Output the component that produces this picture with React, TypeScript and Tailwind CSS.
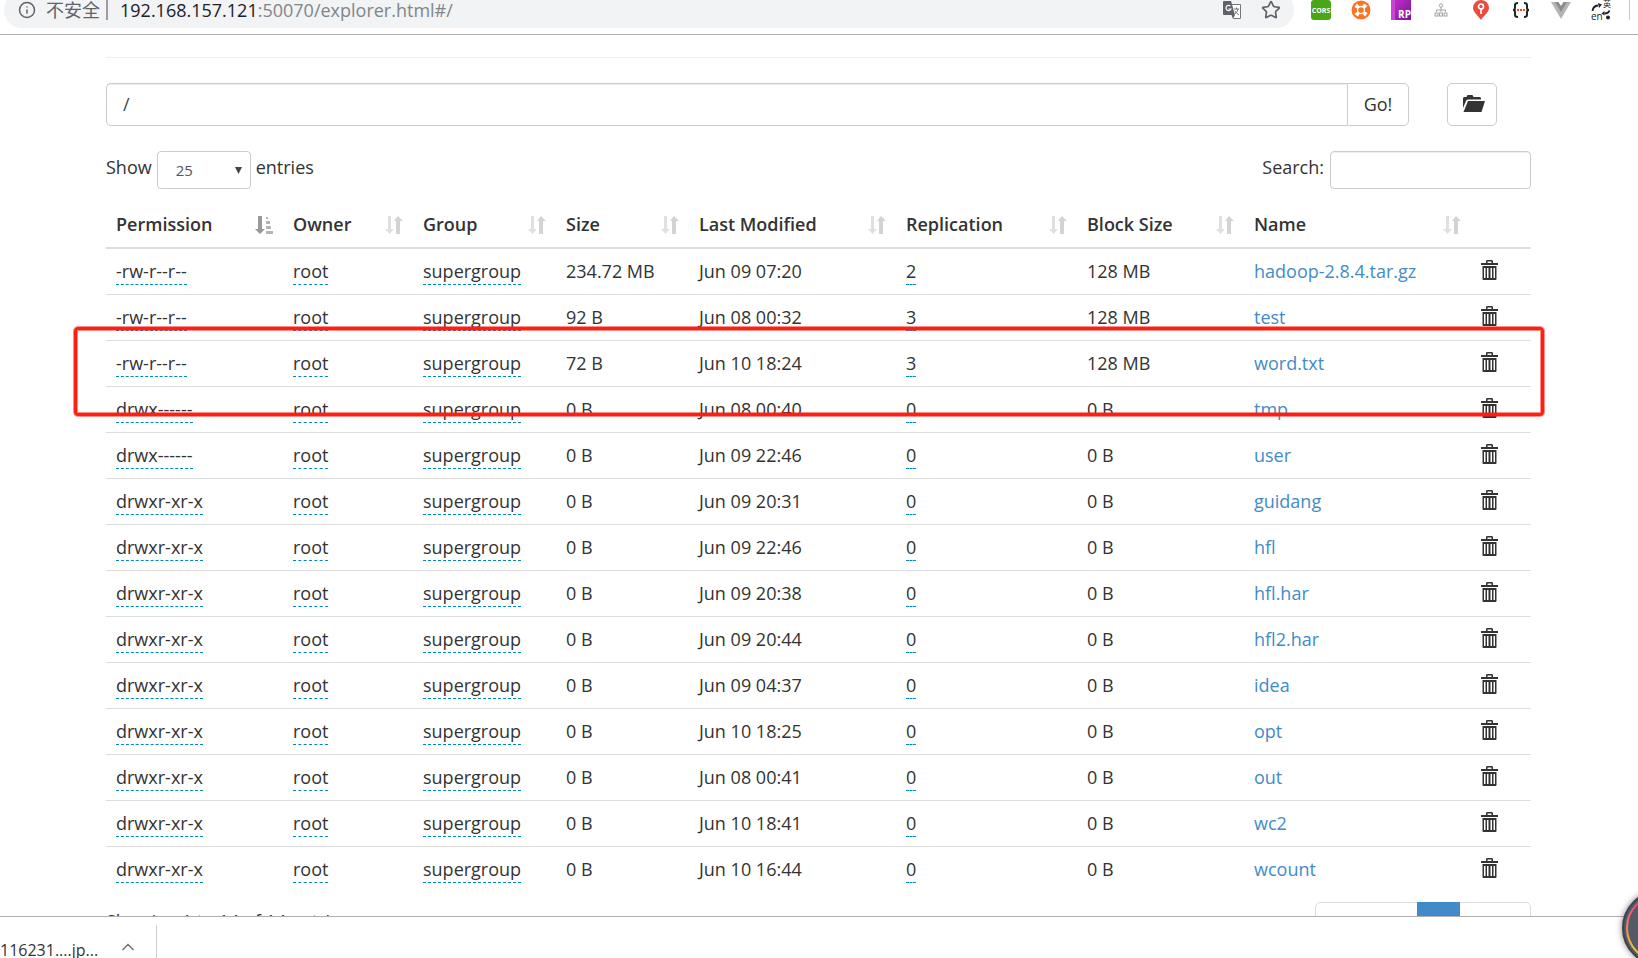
import clsx from 'clsx'
import { ChevronUp, Info, Star } from 'lucide-react'

interface IFileEntry {
  permission: string
  size: string
  modified: string
  replication: number
  blockSize: string
  name: string
}

interface IColumn {
  label: string
  width: string
}

const OWNER = 'root'
const GROUP = 'supergroup'

const columns: IColumn[] = [
  { label: 'Permission', width: 'w-[177px]' },
  { label: 'Owner', width: 'w-[130px]' },
  { label: 'Group', width: 'w-[143px]' },
  { label: 'Size', width: 'w-[133px]' },
  { label: 'Last Modified', width: 'w-[207px]' },
  { label: 'Replication', width: 'w-[181px]' },
  { label: 'Block Size', width: 'w-[167px]' },
  { label: 'Name', width: 'w-[227px]' },
]

const entries: IFileEntry[] = [
  { permission: '-rw-r--r--', size: '234.72 MB', modified: 'Jun 09 07:20', replication: 2, blockSize: '128 MB', name: 'hadoop-2.8.4.tar.gz' },
  { permission: '-rw-r--r--', size: '92 B', modified: 'Jun 08 00:32', replication: 3, blockSize: '128 MB', name: 'test' },
  { permission: '-rw-r--r--', size: '72 B', modified: 'Jun 10 18:24', replication: 3, blockSize: '128 MB', name: 'word.txt' },
  { permission: 'drwx------', size: '0 B', modified: 'Jun 08 00:40', replication: 0, blockSize: '0 B', name: 'tmp' },
  { permission: 'drwx------', size: '0 B', modified: 'Jun 09 22:46', replication: 0, blockSize: '0 B', name: 'user' },
  { permission: 'drwxr-xr-x', size: '0 B', modified: 'Jun 09 20:31', replication: 0, blockSize: '0 B', name: 'guidang' },
  { permission: 'drwxr-xr-x', size: '0 B', modified: 'Jun 09 22:46', replication: 0, blockSize: '0 B', name: 'hfl' },
  { permission: 'drwxr-xr-x', size: '0 B', modified: 'Jun 09 20:38', replication: 0, blockSize: '0 B', name: 'hfl.har' },
  { permission: 'drwxr-xr-x', size: '0 B', modified: 'Jun 09 20:44', replication: 0, blockSize: '0 B', name: 'hfl2.har' },
  { permission: 'drwxr-xr-x', size: '0 B', modified: 'Jun 09 04:37', replication: 0, blockSize: '0 B', name: 'idea' },
  { permission: 'drwxr-xr-x', size: '0 B', modified: 'Jun 10 18:25', replication: 0, blockSize: '0 B', name: 'opt' },
  { permission: 'drwxr-xr-x', size: '0 B', modified: 'Jun 08 00:41', replication: 0, blockSize: '0 B', name: 'out' },
  { permission: 'drwxr-xr-x', size: '0 B', modified: 'Jun 10 18:41', replication: 0, blockSize: '0 B', name: 'wc2' },
  { permission: 'drwxr-xr-x', size: '0 B', modified: 'Jun 10 16:44', replication: 0, blockSize: '0 B', name: 'wcount' },
]

function SortIcon({ active }: { active?: boolean }) {
  if (active) {
    return (
      <svg viewBox="0 0 18 18" className="w-[18px] h-[18px] shrink-0">
        <path d="M3 0h4v13h3l-5 5-5-5h3z" fill="#999" />
        <path d="M11 1h2v2h-2zM11 5h4v3h-4zM11 10h5v3h-5zM11 15h7v3h-7z" fill="#b4b4b4" />
      </svg>
    )
  }
  return (
    <svg viewBox="0 0 18 18" className="w-[18px] h-[18px] shrink-0">
      <path d="M3 0h3v13h3l-4.500 5L0 13h3z" fill="#e0e0e0" />
      <path d="M11 18h4V5h3l-5-5-4 5h2z" fill="#d3d3d3" />
    </svg>
  )
}

function TrashIcon() {
  return (
    <svg viewBox="0 0 17 20" className="block w-[17px] h-5" fill="#333">
      <path d="M5 3V1.200Q5 0 6.200 0h4.600Q12 0 12 1.200V3h-1.500V1.500h-4V3z" />
      <path d="M0 3h17v2H0z" />
      <path
        fillRule="evenodd"
        d="M1.500 6h14v13q0 1-1 1h-12q-1 0-1-1zM3 8v10h1.500V8zM6 8v10h1.500V8zM9.500 8v10H11V8zM12.500 8v10H14V8z"
      />
    </svg>
  )
}

function FolderOpenIcon() {
  return (
    <svg viewBox="0 0 22 17" className="w-[22px] h-[17px]" fill="#333">
      <path d="M0 13V3l1-1h2.500l1-2h5l1 2H17l1 1v1.500H5.500L3.500 5z" />
      <path d="M5 6h17l-3.500 11H.5z" />
    </svg>
  )
}

function TranslateIcon() {
  return (
    <svg viewBox="0 0 18 18" className="w-[18px] h-[18px]">
      <path d="M8 3.500h9.500v14h-7" fill="#fff" stroke="#777" />
      <path d="M1 0h7l4 14H1q-1 0-1-1V1q0-1 1-1z" fill="#5f6368" />
      <path d="M8.500 14H12l-2 4z" fill="#5f6368" />
      <path d="M7.500 5.200A2.600 2.600 0 1 0 8 8H5.500" fill="none" stroke="#fff" strokeWidth="1.200" />
      <path d="M11 8h5M13.500 6.500V8M15 8q-.5 3-3 5M12 10q1.500 2.500 4 4" fill="none" stroke="#777" />
    </svg>
  )
}

const extensions = [
  {
    title: 'CORS',
    icon: (
      <span className="grid place-items-center w-5 h-5 rounded-[3px] bg-[#4ba615] text-white text-[7px] leading-none font-bold">
        CORS
      </span>
    ),
  },
  {
    title: 'Support',
    icon: (
      <svg viewBox="0 0 20 20" className="w-5 h-5">
        <circle cx="10" cy="10" r="9.500" fill="#f6742a" />
        <circle cx="10" cy="10" r="3.500" fill="none" stroke="#fff" strokeWidth="1.300" />
        <path d="M3.500 7l2.500-3.500 2.500 3-2.500 2zM13 3.500l3.500 2.500-3 2.500-2-2.500zM16.500 13L14 16.500l-2.500-3 2.500-2zM7 16.500L3.500 14l3-2.500 2 2.500z" fill="#fff" />
      </svg>
    ),
  },
  {
    title: 'Axure RP',
    icon: (
      <span className="flex items-end justify-end w-5 h-5 border-l-4 border-[#cd44d4] bg-linear-to-br from-[#bd2cc7] to-[#7d149b] text-white text-[10px] leading-[12px] font-bold">
        RP
      </span>
    ),
  },
  {
    title: 'Sitemap',
    icon: (
      <svg viewBox="0 0 14 14" className="w-[14px] h-[14px]" fill="none" stroke="#a3a3a3">
        <circle cx="7" cy="2.500" r="1.700" />
        <path d="M7 4v5M2.500 9V7h9v2" />
        <rect x="1" y="10" width="3" height="3" />
        <rect x="5.500" y="10" width="3" height="3" />
        <rect x="10" y="10" width="3" height="3" />
      </svg>
    ),
  },
  {
    title: 'Pin',
    icon: (
      <svg viewBox="0 0 16 20" className="w-4 h-5">
        <path d="M8 0a8 8 0 0 1 8 8c0 4-5 7.500-8 12C5 15.500 0 12 0 8a8 8 0 0 1 8-8z" fill="#e94c3d" />
        <circle cx="8" cy="6.500" r="2.500" fill="none" stroke="#fff" strokeWidth="1.700" />
        <path d="M8 9v5" stroke="#fff" strokeWidth="1.700" />
      </svg>
    ),
  },
  {
    title: 'JSON',
    icon: (
      <svg viewBox="0 0 18 16" className="w-[18px] h-4" fill="none" stroke="#222" strokeWidth="2">
        <path d="M6 1Q3 1 3 3v3Q3 8 1 8q2 0 2 2v3q0 2 3 2M12 1q3 0 3 2v3q0 2 2 2-2 0-2 2v3q0 2-3 2" />
        <path d="M5 8h2M8 8h2M11 8h2" stroke="#ee4b2b" />
      </svg>
    ),
  },
  {
    title: 'Vue',
    icon: (
      <svg viewBox="0 0 20 17" className="w-5 h-[17px]">
        <path d="M0 0h20L10 17z" fill="#b5b5b5" />
        <path d="M4 0h12l-6 10z" fill="#8c8c8c" />
        <path d="M7.500 0h5L10 4z" fill="#fff" />
      </svg>
    ),
  },
  {
    title: 'Dictionary',
    icon: (
      <span className="relative block w-5 h-5 text-[#222]">
        <span className="absolute top-0 right-0 text-[8px] leading-[8px]">英</span>
        <span className="absolute bottom-0 left-0 text-[10px] leading-[8px]">en</span>
        <svg viewBox="0 0 20 20" className="absolute inset-0">
          <path d="M1.500 11Q2 6 7 5.500" fill="none" stroke="#222" strokeWidth="1.800" />
          <path d="M7 3l4 1.500-3 3.500z" fill="#222" />
          <path d="M18.500 10.500q-1 3-5 3" fill="none" stroke="#222" strokeWidth="1.800" />
          <path d="M13.500 11v4.500l-3-2z" fill="#222" />
          <circle cx="17" cy="17.500" r="2" fill="#222" />
        </svg>
      </span>
    ),
  },
]

function AddressBar() {
  return (
    <header className="flex items-end h-[35px] shrink-0 overflow-hidden pl-1 pr-2 pb-[6px] border-b border-[#b0b0b0]">
      <div className="flex flex-1 items-center h-9 pl-[14px] pr-[13px] rounded-full bg-[#f1f3f4] leading-5">
        <Info className="w-[18px] h-[18px] text-[#5f6368]" />
        <span className="ml-[10px] text-lg leading-5 text-[#5f6368]">不安全</span>
        <span className="w-[2px] h-5 ml-[6px] mr-3 bg-[#9b9da0]" />
        <a href="#/" className="flex-1 text-[#202124]">
          192.168.157.121<span className="text-[#80868b]">:50070/explorer.html#/</span>
        </a>
        <button aria-label="Translate">
          <TranslateIcon />
        </button>
        <button aria-label="Bookmark" className="ml-5">
          <Star className="w-5 h-5 text-[#5f6368]" strokeLinejoin="miter" />
        </button>
      </div>
      <div className="flex items-center h-9 ml-[7px]">
        {extensions.map((extension) => (
          <button key={extension.title} aria-label={extension.title} className="grid place-items-center w-10 h-5">
            {extension.icon}
          </button>
        ))}
        <span className="w-px h-5 ml-2 bg-[#c8c8c8]" />
      </div>
    </header>
  )
}

function Editable({ children }: { children: string | number }) {
  return <span className="pb-px border-b border-dashed border-[#0088cc]">{children}</span>
}

function FileTable() {
  return (
    <div className="relative mt-[13px]">
      <table className="w-full table-fixed border-separate border-spacing-0 text-left">
        <thead>
          <tr>
            {columns.map((column, index) => (
              <th key={column.label} className={clsx('px-[10px] py-[10px] border-b-2 border-[#ddd] font-semibold', column.width)}>
                <button className="flex items-center justify-between w-full">
                  {column.label}
                  <SortIcon active={index === 0} />
                </button>
              </th>
            ))}
            <th className="w-[60px] border-b-2 border-[#ddd]" />
          </tr>
        </thead>
        <tbody className="[&_td]:px-[10px] [&_td]:py-[10px] [&_td]:border-[#ddd] [&_tr+tr_td]:border-t">
          {entries.map((entry) => (
            <tr key={entry.name}>
              <td><Editable>{entry.permission}</Editable></td>
              <td><Editable>{OWNER}</Editable></td>
              <td><Editable>{GROUP}</Editable></td>
              <td>{entry.size}</td>
              <td>{entry.modified}</td>
              <td><Editable>{entry.replication}</Editable></td>
              <td>{entry.blockSize}</td>
              <td><a href="#/" className="text-[#428bca]">{entry.name}</a></td>
              <td className="align-top">
                <button aria-label={`Delete ${entry.name}`} className="block pt-px">
                  <TrashIcon />
                </button>
              </td>
            </tr>
          ))}
        </tbody>
      </table>
      {/* highlight around the word.txt row */}
      <div className="absolute -left-8 -right-[13px] top-[125px] h-[89px] rounded-[4px] border-[3px] border-[#ff1e12] ring-1 ring-[#ff1e12]/50 inset-shadow-[0_0_0_1px_#ff1e1280] pointer-events-none" />
    </div>
  )
}

export default function App() {
  return (
    <div className="relative flex flex-col h-screen overflow-hidden bg-white text-[#333] text-lg leading-[25px] font-['Open_Sans','Noto_Sans_CJK_SC',sans-serif]">
      <AddressBar />

      <main className="flex-1 min-h-0 overflow-hidden pt-[22px] pl-[106px] pr-[107px]">
        <hr className="border-[#eee]" />

        <div className="flex mt-[25px] h-[43px] pr-[34px]">
          <input
            aria-label="Directory"
            defaultValue="/"
            className="flex-1 min-w-0 px-4 rounded-l-[5px] border border-r-0 border-[#ccc] text-[#444] inset-shadow-[0_1px_1px_#00000013]"
          />
          <button className="w-[62px] rounded-r-[5px] border border-[#ccc]">Go!</button>
          <button aria-label="Create directory" className="grid place-items-center w-[50px] pl-1 pb-[2px] ml-[38px] rounded-[5px] border border-[#ccc]">
            <FolderOpenIcon />
          </button>
        </div>

        <div className="flex items-start justify-between mt-[25px]">
          <label className="flex items-start">
            <span className="pt-1">Show</span>
            <span className="relative mx-[5px]">
              <select className="block appearance-none w-[94px] h-[38px] pl-[18px] rounded-[4px] border border-[#ccc] bg-white text-[15px] text-[#555]">
                <option>25</option>
              </select>
              <svg viewBox="0 0 7 7" className="absolute right-[9px] top-4 w-[7px] h-[7px]" fill="#444">
                <path d="M0 0h7L3.500 7z" />
              </svg>
            </span>
            <span className="pt-1">entries</span>
          </label>
          <label className="flex items-start gap-[6px]">
            <span className="pt-1">Search:</span>
            <input className="w-[201px] h-[38px] px-3 rounded-[4px] border border-[#ccc] text-[15px] inset-shadow-[0_1px_1px_#00000013]" />
          </label>
        </div>

        <FileTable />

        <div className="flex items-start justify-between mt-[10px]">
          <p className="pt-[7px]">Showing 1 to 14 of 14 entries</p>
          <nav className="flex h-[43px] rounded-[5px] border border-[#ddd] [&>button]:h-[43px]">
            <button className="w-[101px] text-[#777]">Previous</button>
            <button className="w-[43px] -mt-px bg-[#428bca] text-white">1</button>
            <button className="w-[70px] text-[#777]">Next</button>
          </nav>
        </div>
      </main>

      <footer className="flex shrink-0 h-[42px] pt-2 overflow-hidden border-t border-[#b0b0b0] bg-white">
        <span className="pt-[13px] text-base leading-6">116231....jp...</span>
        <button aria-label="Download options" className="self-start pt-3 ml-5">
          <ChevronUp className="w-5 h-5 text-[#777]" />
        </button>
        <span className="w-px ml-[18px] bg-[#ccc]" />
      </footer>

      {/* floating assistant ball, half hidden behind the window edge */}
      <div className="absolute -right-[60px] bottom-[-8px] w-[76px] h-[76px] rounded-full bg-[#555a66] border-2 border-[#3f434d] shadow-[0_0_6px_#00000080]">
        <svg viewBox="0 0 72 72" className="w-full h-full">
          <defs>
            <linearGradient id="ball-ring" x1="0" y1="0" x2="0" y2="1">
              <stop offset="0.100" stopColor="#e83e8c" />
              <stop offset="0.500" stopColor="#f08a5d" />
              <stop offset="0.900" stopColor="#f5d020" />
            </linearGradient>
          </defs>
          <circle cx="36" cy="36" r="33" fill="#555a66" stroke="url(#ball-ring)" strokeWidth="2" />
        </svg>
      </div>
    </div>
  )
}
